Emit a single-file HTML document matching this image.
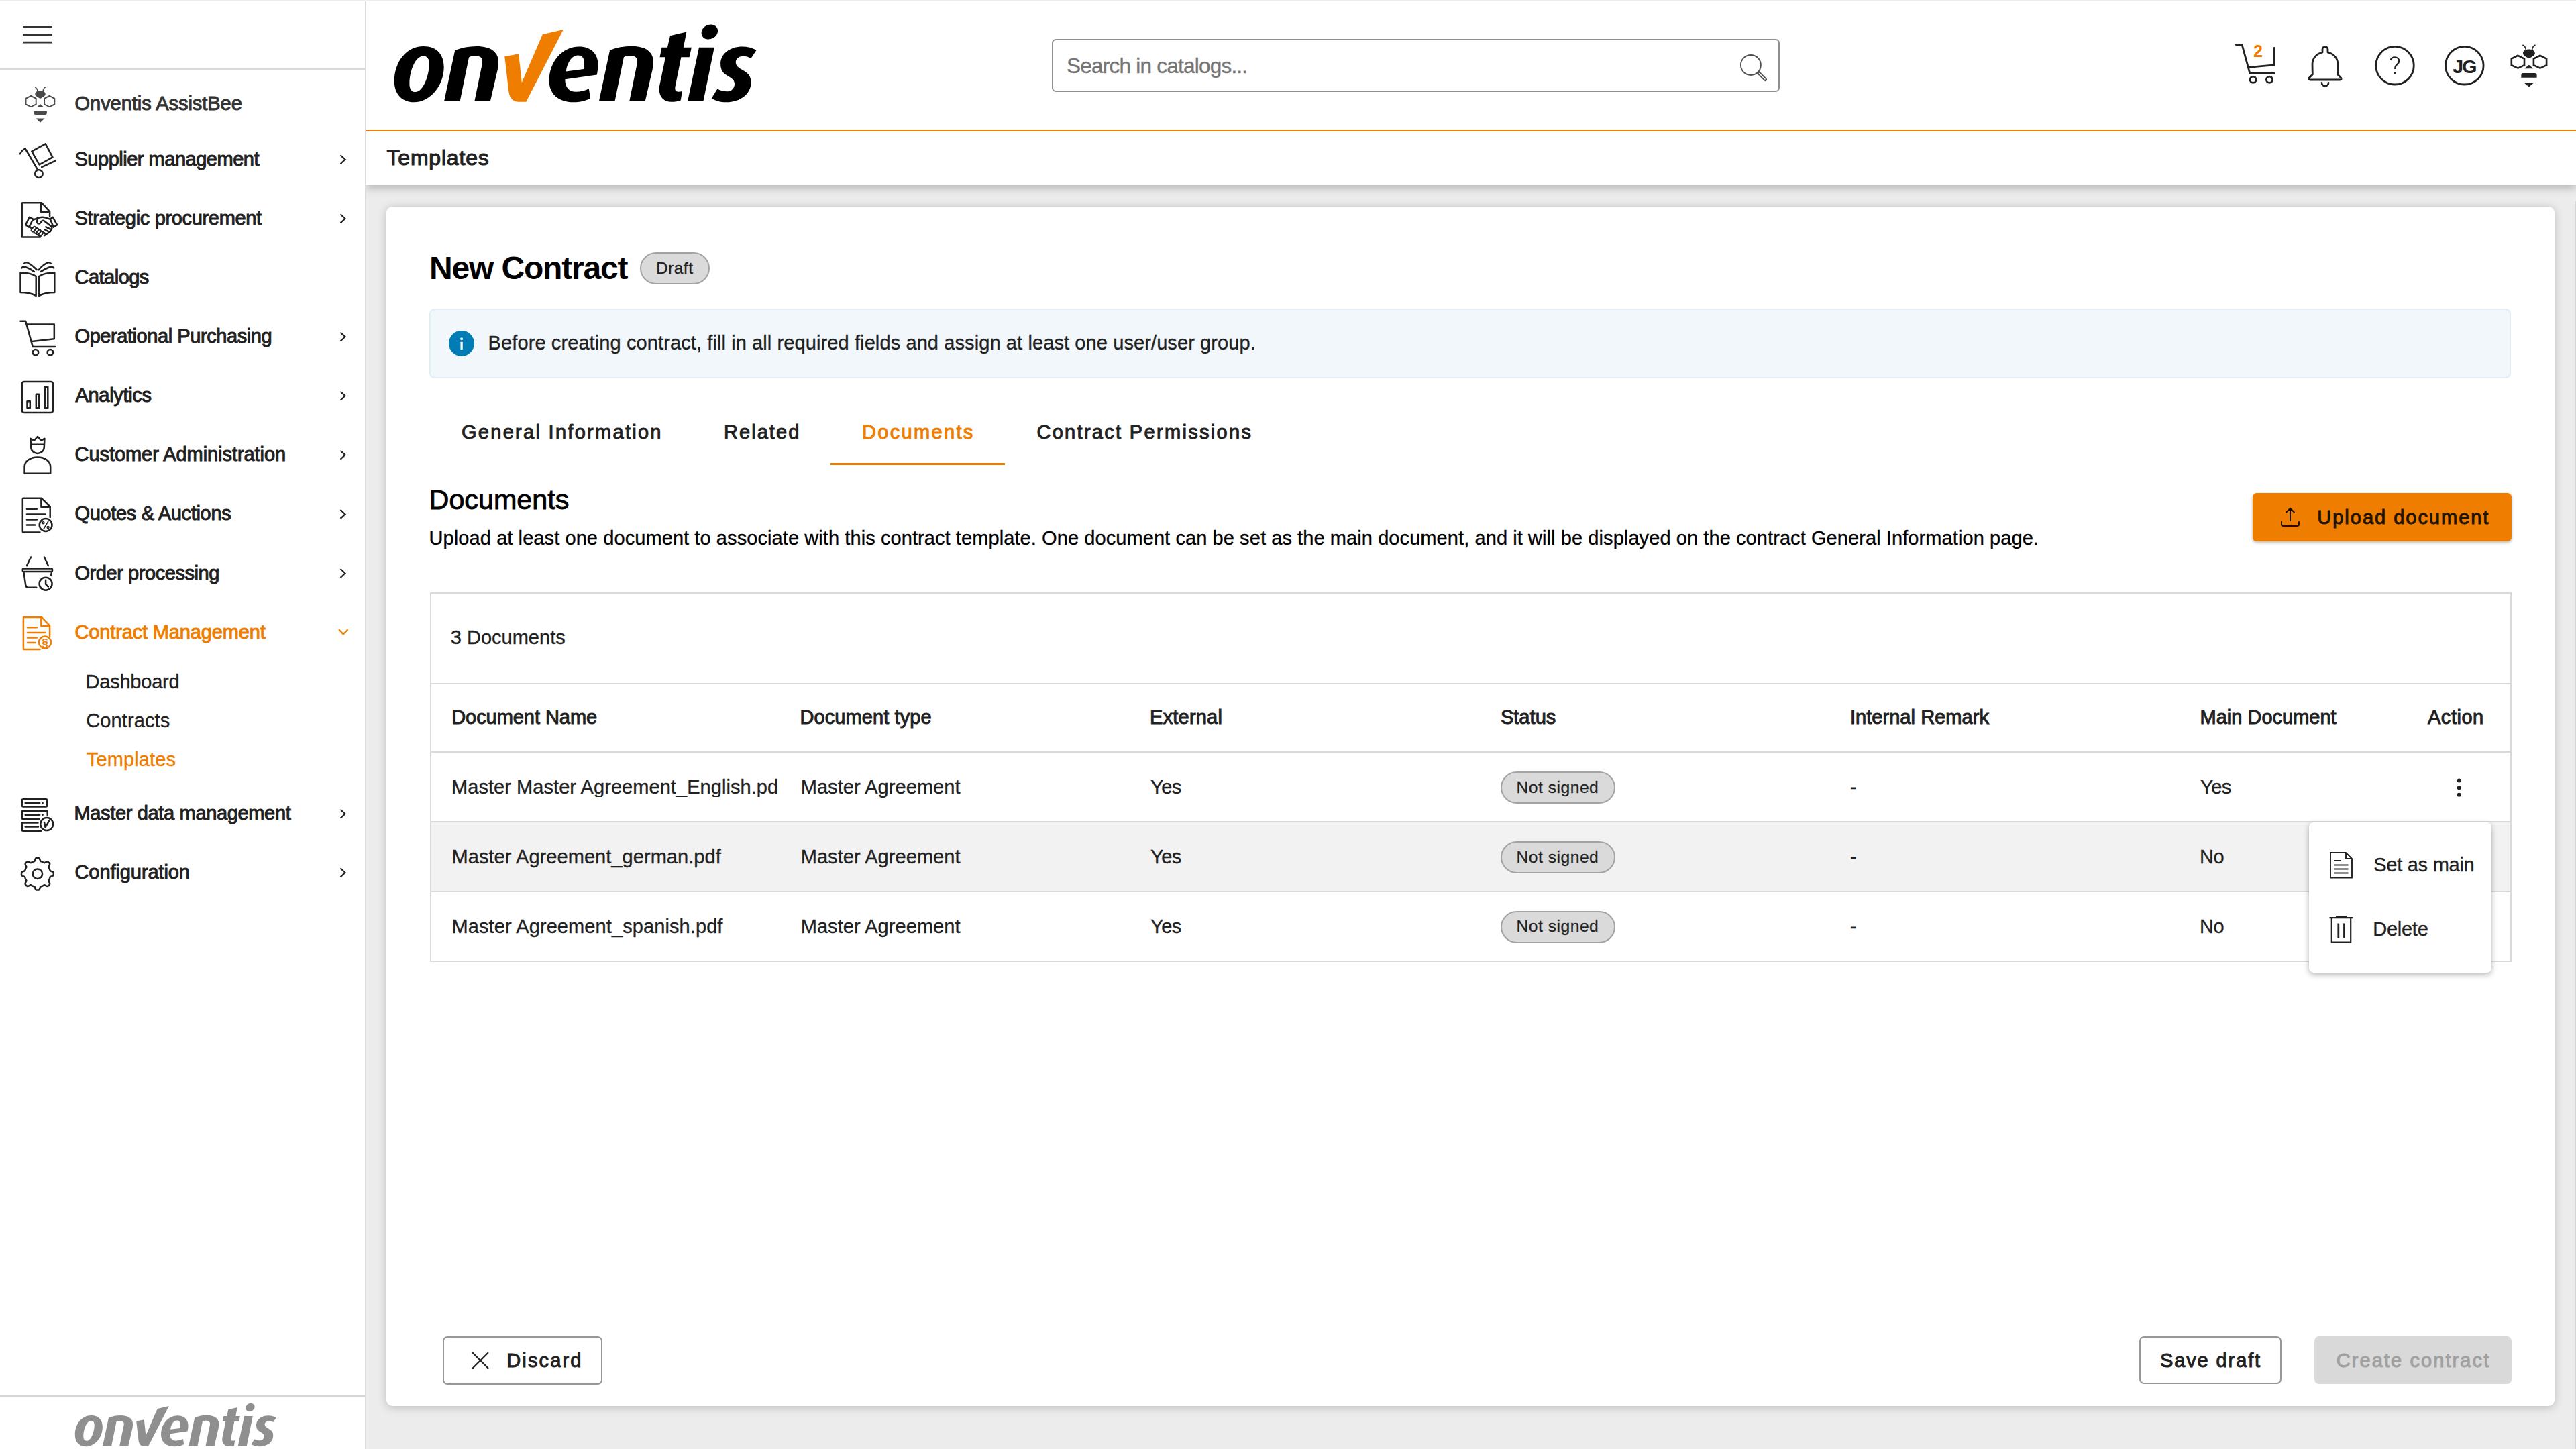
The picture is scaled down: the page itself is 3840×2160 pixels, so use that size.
<!DOCTYPE html>
<html><head><meta charset="utf-8"><title>Onventis - Templates</title>
<style>
html,body{margin:0;padding:0;}
body{width:3840px;height:2160px;position:relative;overflow:hidden;background:#ececec;font-family:"Liberation Sans",sans-serif;}
.a{position:absolute;box-sizing:border-box;}
.t{position:absolute;white-space:nowrap;font-family:"Liberation Sans",sans-serif;}
svg{position:absolute;left:0;top:0;overflow:visible}
</style></head><body>
<div class='a' style='left:546px;top:0px;width:3294.00px;height:276.00px;background:#fff;box-shadow:0 4px 12px rgba(0,0,0,0.25);'></div>
<div class='a' style='left:575.8px;top:307.8px;width:3232.30px;height:1788.20px;background:#fff;border-radius:9px;box-shadow:0 2px 14px rgba(0,0,0,0.22);'></div>
<div class='a' style='left:0px;top:0px;width:546.00px;height:2160.00px;background:#fff;border-right:2px solid #dcdcdc;'></div>
<div class='a' style='left:0px;top:102px;width:544.00px;height:2.00px;background:#d9d9d9;'></div>
<div class='a' style='left:0px;top:2080px;width:544.00px;height:2.00px;background:#d6d6d6;'></div>
<div class='a' style='left:0px;top:0px;width:3840.00px;height:1.00px;background:#e8ecf4;'></div>
<div class='a' style='left:0px;top:1px;width:3840.00px;height:1.00px;background:#d4d4d6;'></div>
<div class='a' style='left:3839px;top:300px;width:1.00px;height:1860.00px;background:#d6d6d6;'></div>
<div class='a' style='left:546px;top:194px;width:3294.00px;height:2.00px;background:#ef7d00;'></div>
<div class='a' style='left:1568.3px;top:58.3px;width:1084.70px;height:79.20px;border:2px solid #8f8f8f;border-radius:6px;background:#fff;'></div>
<div class='a' style='left:640.3px;top:460px;width:3103.20px;height:104.00px;background:#f1f7fb;border:2px solid #e1eef5;border-radius:8px;'></div>
<div class='a' style='left:954px;top:376.4px;width:103.50px;height:47.20px;background:#dadada;border:2px solid #a3a3a3;border-radius:24px;'></div>
<div class='a' style='left:1238px;top:689.5px;width:259.80px;height:3.00px;background:#ef7d00;'></div>
<div class='a' style='left:3358.2px;top:735px;width:385.80px;height:71.60px;background:#ef7d00;border-radius:6px;box-shadow:0 2px 4px rgba(0,0,0,0.28);'></div>
<div class='a' style='left:641px;top:882.5px;width:3103.00px;height:551.00px;border:2px solid #d9d9d9;'></div>
<div class='a' style='left:643px;top:1226px;width:3099.00px;height:102.00px;background:#f2f2f2;'></div>
<div class='a' style='left:643px;top:1017.5px;width:3099.00px;height:2.00px;background:#d9d9d9;'></div>
<div class='a' style='left:643px;top:1120px;width:3099.00px;height:2.00px;background:#d9d9d9;'></div>
<div class='a' style='left:643px;top:1224px;width:3099.00px;height:2.00px;background:#d9d9d9;'></div>
<div class='a' style='left:643px;top:1328px;width:3099.00px;height:2.00px;background:#d9d9d9;'></div>
<div class='a' style='left:2237.3px;top:1150.4px;width:170.90px;height:47.20px;background:#dadada;border:2px solid #a3a3a3;border-radius:24px;'></div>
<div class='a' style='left:2237.3px;top:1254.4px;width:170.90px;height:47.20px;background:#dadada;border:2px solid #a3a3a3;border-radius:24px;'></div>
<div class='a' style='left:2237.3px;top:1358.4px;width:170.90px;height:47.20px;background:#dadada;border:2px solid #a3a3a3;border-radius:24px;'></div>
<div class='a' style='left:3442px;top:1226.3px;width:271.70px;height:223.90px;background:#fff;border-radius:7px;box-shadow:0 3px 9px rgba(0,0,0,0.30);'></div>
<div class='a' style='left:660.3px;top:1992px;width:237.30px;height:71.60px;border:2px solid #979797;border-radius:7px;background:#fff;'></div>
<div class='a' style='left:3188.6px;top:1992.3px;width:212.90px;height:70.80px;border:2px solid #979797;border-radius:7px;background:#fff;'></div>
<div class='a' style='left:3450.2px;top:1992px;width:293.70px;height:71.00px;background:#d9d9d9;border-radius:7px;'></div>
<div class='t' style='left:111.50px;top:139.85px;font-size:29px;line-height:29px;font-weight:400;color:#333333;letter-spacing:-0.029px;-webkit-text-stroke:1.0px #333333;'>Onventis AssistBee</div>
<div class='t' style='left:111.50px;top:222.85px;font-size:29px;line-height:29px;font-weight:400;color:#212121;letter-spacing:-0.483px;-webkit-text-stroke:1.0px #212121;'>Supplier management</div>
<div class='t' style='left:111.50px;top:310.95px;font-size:29px;line-height:29px;font-weight:400;color:#212121;letter-spacing:-0.335px;-webkit-text-stroke:1.0px #212121;'>Strategic procurement</div>
<div class='t' style='left:111.50px;top:399.05px;font-size:29px;line-height:29px;font-weight:400;color:#212121;letter-spacing:-0.514px;-webkit-text-stroke:1.0px #212121;'>Catalogs</div>
<div class='t' style='left:111.50px;top:487.15px;font-size:29px;line-height:29px;font-weight:400;color:#212121;letter-spacing:-0.429px;-webkit-text-stroke:1.0px #212121;'>Operational Purchasing</div>
<div class='t' style='left:112.50px;top:575.25px;font-size:29px;line-height:29px;font-weight:400;color:#212121;letter-spacing:-0.312px;-webkit-text-stroke:1.0px #212121;'>Analytics</div>
<div class='t' style='left:111.50px;top:663.35px;font-size:29px;line-height:29px;font-weight:400;color:#212121;letter-spacing:-0.055px;-webkit-text-stroke:1.0px #212121;'>Customer Administration</div>
<div class='t' style='left:111.50px;top:751.45px;font-size:29px;line-height:29px;font-weight:400;color:#212121;letter-spacing:-0.337px;-webkit-text-stroke:1.0px #212121;'>Quotes &amp; Auctions</div>
<div class='t' style='left:111.50px;top:839.55px;font-size:29px;line-height:29px;font-weight:400;color:#212121;letter-spacing:-0.433px;-webkit-text-stroke:1.0px #212121;'>Order processing</div>
<div class='t' style='left:111.50px;top:927.65px;font-size:29px;line-height:29px;font-weight:400;color:#ef7d00;letter-spacing:-0.150px;-webkit-text-stroke:1.0px #ef7d00;'>Contract Management</div>
<div class='t' style='left:127.50px;top:1002.15px;font-size:29px;line-height:29px;font-weight:400;color:#212121;letter-spacing:-0.212px;-webkit-text-stroke:0.35px #212121;'>Dashboard</div>
<div class='t' style='left:128.20px;top:1060.05px;font-size:29px;line-height:29px;font-weight:400;color:#212121;letter-spacing:0.125px;-webkit-text-stroke:0.35px #212121;'>Contracts</div>
<div class='t' style='left:128.80px;top:1118.25px;font-size:29px;line-height:29px;font-weight:400;color:#ef7d00;letter-spacing:0.137px;-webkit-text-stroke:0.35px #ef7d00;'>Templates</div>
<div class='t' style='left:110.50px;top:1198.25px;font-size:29px;line-height:29px;font-weight:400;color:#212121;letter-spacing:-0.343px;-webkit-text-stroke:1.0px #212121;'>Master data management</div>
<div class='t' style='left:111.50px;top:1285.95px;font-size:29px;line-height:29px;font-weight:400;color:#212121;letter-spacing:-0.083px;-webkit-text-stroke:1.0px #212121;'>Configuration</div>
<div class='t' style='left:1590.10px;top:83.12px;font-size:31.5px;line-height:31.5px;font-weight:400;color:#757575;letter-spacing:-0.770px;-webkit-text-stroke:0.38px #757575;'>Search in catalogs...</div>
<div class='t' style='left:3359.00px;top:64.45px;font-size:25px;line-height:25px;font-weight:700;color:#ef7d00;letter-spacing:0.000px;'>2</div>
<div class='t' style='left:3656.20px;top:85.38px;font-size:28.5px;line-height:28.5px;font-weight:700;color:#212121;letter-spacing:-1.900px;'>JG</div>
<div class='t' style='left:576.50px;top:219.20px;font-size:32px;line-height:32px;font-weight:400;color:#212121;letter-spacing:0.800px;-webkit-text-stroke:1.1px #212121;'>Templates</div>
<div class='t' style='left:640.00px;top:376.00px;font-size:48px;line-height:48px;font-weight:700;color:#000000;letter-spacing:-1.164px;'>New Contract</div>
<div class='t' style='left:977.90px;top:387.88px;font-size:24.5px;line-height:24.5px;font-weight:400;color:#212121;letter-spacing:0.500px;-webkit-text-stroke:0.3px #212121;'>Draft</div>
<div class='t' style='left:727.60px;top:497.25px;font-size:29px;line-height:29px;font-weight:400;color:#212121;letter-spacing:0.101px;-webkit-text-stroke:0.35px #212121;'>Before creating contract, fill in all required fields and assign at least one user/user group.</div>
<div class='t' style='left:688.00px;top:630.15px;font-size:29px;line-height:29px;font-weight:400;color:#212121;letter-spacing:2.289px;-webkit-text-stroke:1.0px #212121;'>General Information</div>
<div class='t' style='left:1079.00px;top:630.15px;font-size:29px;line-height:29px;font-weight:400;color:#212121;letter-spacing:2.050px;-webkit-text-stroke:1.0px #212121;'>Related</div>
<div class='t' style='left:1285.00px;top:630.15px;font-size:29px;line-height:29px;font-weight:400;color:#ef7d00;letter-spacing:2.325px;-webkit-text-stroke:1.0px #ef7d00;'>Documents</div>
<div class='t' style='left:1545.40px;top:630.15px;font-size:29px;line-height:29px;font-weight:400;color:#212121;letter-spacing:2.311px;-webkit-text-stroke:1.0px #212121;'>Contract Permissions</div>
<div class='t' style='left:639.60px;top:725.39px;font-size:41.3px;line-height:41.3px;font-weight:400;color:#000000;letter-spacing:-0.013px;-webkit-text-stroke:0.9px #000000;'>Documents</div>
<div class='t' style='left:639.60px;top:788.15px;font-size:29px;line-height:29px;font-weight:400;color:#000000;letter-spacing:0.083px;-webkit-text-stroke:0.35px #000000;'>Upload at least one document to associate with this contract template. One document can be set as the main document, and it will be displayed on the contract General Information page.</div>
<div class='t' style='left:3454.30px;top:757.05px;font-size:29px;line-height:29px;font-weight:400;color:#1c1400;letter-spacing:1.986px;-webkit-text-stroke:1.0px #1c1400;'>Upload document</div>
<div class='t' style='left:671.70px;top:935.55px;font-size:29px;line-height:29px;font-weight:400;color:#212121;letter-spacing:0.020px;-webkit-text-stroke:0.35px #212121;'>3 Documents</div>
<div class='t' style='left:673.20px;top:1055.15px;font-size:29px;line-height:29px;font-weight:400;color:#212121;letter-spacing:-0.050px;-webkit-text-stroke:1.0px #212121;'>Document Name</div>
<div class='t' style='left:1192.50px;top:1055.15px;font-size:29px;line-height:29px;font-weight:400;color:#212121;letter-spacing:0.092px;-webkit-text-stroke:1.0px #212121;'>Document type</div>
<div class='t' style='left:1714.10px;top:1055.15px;font-size:29px;line-height:29px;font-weight:400;color:#212121;letter-spacing:0.200px;-webkit-text-stroke:1.0px #212121;'>External</div>
<div class='t' style='left:2236.90px;top:1055.15px;font-size:29px;line-height:29px;font-weight:400;color:#212121;letter-spacing:0.040px;-webkit-text-stroke:1.0px #212121;'>Status</div>
<div class='t' style='left:2757.90px;top:1055.15px;font-size:29px;line-height:29px;font-weight:400;color:#212121;letter-spacing:0.050px;-webkit-text-stroke:1.0px #212121;'>Internal Remark</div>
<div class='t' style='left:3279.60px;top:1055.15px;font-size:29px;line-height:29px;font-weight:400;color:#212121;letter-spacing:-0.008px;-webkit-text-stroke:1.0px #212121;'>Main Document</div>
<div class='t' style='left:3619.00px;top:1055.15px;font-size:29px;line-height:29px;font-weight:400;color:#212121;letter-spacing:0.520px;-webkit-text-stroke:1.0px #212121;'>Action</div>
<div class='t' style='left:673.00px;top:1158.95px;font-size:29px;line-height:29px;font-weight:400;color:#212121;letter-spacing:0.058px;-webkit-text-stroke:0.35px #212121;width:485.5px;overflow:hidden;'>Master Master Agreement_English.pdf</div>
<div class='t' style='left:1193.70px;top:1158.95px;font-size:29px;line-height:29px;font-weight:400;color:#212121;letter-spacing:0.060px;-webkit-text-stroke:0.35px #212121;'>Master Agreement</div>
<div class='t' style='left:1715.00px;top:1158.95px;font-size:29px;line-height:29px;font-weight:400;color:#212121;letter-spacing:-0.500px;-webkit-text-stroke:0.35px #212121;'>Yes</div>
<div class='t' style='left:2260.50px;top:1161.89px;font-size:24.6px;line-height:24.6px;font-weight:400;color:#212121;letter-spacing:0.522px;-webkit-text-stroke:0.3px #212121;'>Not signed</div>
<div class='t' style='left:3280.00px;top:1158.95px;font-size:29px;line-height:29px;font-weight:400;color:#212121;letter-spacing:-0.500px;-webkit-text-stroke:0.35px #212121;'>Yes</div>
<div class='t' style='left:2758.00px;top:1158.95px;font-size:29px;line-height:29px;font-weight:400;color:#212121;letter-spacing:0.000px;-webkit-text-stroke:0.35px #212121;'>-</div>
<div class='t' style='left:673.50px;top:1262.75px;font-size:29px;line-height:29px;font-weight:400;color:#212121;letter-spacing:0.058px;-webkit-text-stroke:0.35px #212121;'>Master Agreement_german.pdf</div>
<div class='t' style='left:1193.70px;top:1262.75px;font-size:29px;line-height:29px;font-weight:400;color:#212121;letter-spacing:0.060px;-webkit-text-stroke:0.35px #212121;'>Master Agreement</div>
<div class='t' style='left:1715.00px;top:1262.75px;font-size:29px;line-height:29px;font-weight:400;color:#212121;letter-spacing:-0.500px;-webkit-text-stroke:0.35px #212121;'>Yes</div>
<div class='t' style='left:2260.50px;top:1265.69px;font-size:24.6px;line-height:24.6px;font-weight:400;color:#212121;letter-spacing:0.522px;-webkit-text-stroke:0.3px #212121;'>Not signed</div>
<div class='t' style='left:3279.00px;top:1262.75px;font-size:29px;line-height:29px;font-weight:400;color:#212121;letter-spacing:-0.500px;-webkit-text-stroke:0.35px #212121;'>No</div>
<div class='t' style='left:2758.00px;top:1262.75px;font-size:29px;line-height:29px;font-weight:400;color:#212121;letter-spacing:0.000px;-webkit-text-stroke:0.35px #212121;'>-</div>
<div class='t' style='left:673.50px;top:1366.55px;font-size:29px;line-height:29px;font-weight:400;color:#212121;letter-spacing:0.093px;-webkit-text-stroke:0.35px #212121;'>Master Agreement_spanish.pdf</div>
<div class='t' style='left:1193.70px;top:1366.55px;font-size:29px;line-height:29px;font-weight:400;color:#212121;letter-spacing:0.060px;-webkit-text-stroke:0.35px #212121;'>Master Agreement</div>
<div class='t' style='left:1715.00px;top:1366.55px;font-size:29px;line-height:29px;font-weight:400;color:#212121;letter-spacing:-0.500px;-webkit-text-stroke:0.35px #212121;'>Yes</div>
<div class='t' style='left:2260.50px;top:1369.49px;font-size:24.6px;line-height:24.6px;font-weight:400;color:#212121;letter-spacing:0.522px;-webkit-text-stroke:0.3px #212121;'>Not signed</div>
<div class='t' style='left:3279.00px;top:1366.55px;font-size:29px;line-height:29px;font-weight:400;color:#212121;letter-spacing:-0.500px;-webkit-text-stroke:0.35px #212121;'>No</div>
<div class='t' style='left:2758.00px;top:1366.55px;font-size:29px;line-height:29px;font-weight:400;color:#212121;letter-spacing:0.000px;-webkit-text-stroke:0.35px #212121;'>-</div>
<div class='t' style='left:3538.20px;top:1275.05px;font-size:29px;line-height:29px;font-weight:400;color:#212121;letter-spacing:-0.260px;-webkit-text-stroke:0.35px #212121;'>Set as main</div>
<div class='t' style='left:3537.20px;top:1371.35px;font-size:29px;line-height:29px;font-weight:400;color:#212121;letter-spacing:-0.240px;-webkit-text-stroke:0.35px #212121;'>Delete</div>
<div class='t' style='left:755.30px;top:2014.25px;font-size:29px;line-height:29px;font-weight:400;color:#212121;letter-spacing:2.133px;-webkit-text-stroke:1.0px #212121;'>Discard</div>
<div class='t' style='left:3219.90px;top:2014.45px;font-size:29px;line-height:29px;font-weight:400;color:#212121;letter-spacing:1.900px;-webkit-text-stroke:1.0px #212121;'>Save draft</div>
<div class='t' style='left:3482.70px;top:2014.45px;font-size:29px;line-height:29px;font-weight:400;color:#a0a0a0;letter-spacing:2.093px;-webkit-text-stroke:1.0px #a0a0a0;'>Create contract</div>
<svg width='3840' height='2160' viewBox='0 0 3840 2160'><line x1='34' y1='40.2' x2='78' y2='40.2' stroke='#333' stroke-width='2.6'/><line x1='34' y1='51.9' x2='78' y2='51.9' stroke='#333' stroke-width='2.6'/><line x1='34' y1='63.1' x2='78' y2='63.1' stroke='#333' stroke-width='2.6'/><path d='M52 129.9 Q55.4 131.4 56 135.8 M67.8 129.9 Q64.5 131.4 64.1 135.8' fill='none' stroke='#4a4a4a' stroke-width='1.5'/><path d='M52.3 140.5 C52.3 137 55.5 134.9 60 134.9 C64.5 134.9 67.7 137 67.7 140.5 C67.7 143 63.5 145 60 146.9 C56.5 145 52.3 143 52.3 140.5 Z' fill='#4a4a4a'/><polygon points='46.1,142.9 53.7,146.8 53.7,155.4 46.1,159.3 38.5,155.4 38.5,146.8' fill='none' stroke='#4a4a4a' stroke-width='1.9'/><polygon points='73.7,142.9 81.3,146.8 81.3,155.4 73.7,159.3 66.1,155.4 66.1,146.8' fill='none' stroke='#4a4a4a' stroke-width='1.9'/><path d='M54.8 159.8 L65.3 159.8 L60 155 Z' fill='#4a4a4a'/><path d='M50.1 165.7 L69.9 165.7 L69.9 168 Q69.9 170.9 67 170.9 L53 170.9 Q50.1 170.9 50.1 168 Z' fill='#4a4a4a'/><path d='M53.5 176.5 L66.6 176.5 L60 182.7 Z' fill='#4a4a4a'/><path d='M29.9 229.3 Q32.4 224.3 37.4 221.2 L56 252.9 M62.2 249.2 L82.1 239.9' fill='none' stroke='#212121' stroke-width='2.5' stroke-linecap='round' stroke-linejoin='round'/><polygon points='47.3,225.6 67.8,214.4 78.4,234.3 58.5,245.5' fill='none' stroke='#212121' stroke-width='2.5' stroke-linecap='round' stroke-linejoin='round'/><circle cx='57.9' cy='259.1' r='5.8' fill='none' stroke='#212121' stroke-width='2.5' stroke-linecap='round' stroke-linejoin='round'/><path d='M74.1 322.5 L74.1 315.4 L62 302.2 L34 302.2 Q32.7 302.2 32.7 303.5 L32.7 352.2 Q32.7 353.5 34 353.5 L59.8 353.5 M61.2 302.2 L61.2 316 L74.1 316' fill='none' stroke='#212121' stroke-width='2.5' stroke-linecap='round' stroke-linejoin='round'/><polygon points='43.8,323.7 49.3,326.5 43.2,338.6 38.2,335.3' fill='none' stroke='#212121' stroke-width='2.5' stroke-linecap='round' stroke-linejoin='round'/><polygon points='78.6,323.7 85.2,335.3 79.7,338.6 74.7,326.5' fill='none' stroke='#212121' stroke-width='2.5' stroke-linecap='round' stroke-linejoin='round'/><path d='M49.8 327.6 C54 326 58 323.7 63.1 323.7 C67 323.7 70.5 325 74.1 326.5 M55.4 328 C54.8 331 55 333.6 58.1 333.6 C60 333.6 61 331 62.5 329.4 C63.5 328.5 65 328.7 66 329.4 L76.8 337.8 M77.3 339.3 C77.5 342 76 344 74.5 345.5 L66 351.2 M43.8 337.5 L47.5 341' fill='none' stroke='#212121' stroke-width='2.5' stroke-linecap='round' stroke-linejoin='round'/><rect x='48.0' y='337.4' width='4.2' height='8.4' rx='2.1' transform='rotate(38 50.1 341.6)' fill='#fff' stroke='#212121' stroke-width='2'/><rect x='51.9' y='339.8' width='4.2' height='8.4' rx='2.1' transform='rotate(38 54 344)' fill='#fff' stroke='#212121' stroke-width='2'/><rect x='55.5' y='342.1' width='4.2' height='8.4' rx='2.1' transform='rotate(38 57.6 346.3)' fill='#fff' stroke='#212121' stroke-width='2'/><rect x='58.8' y='344.4' width='4.2' height='8.4' rx='2.1' transform='rotate(38 60.9 348.6)' fill='#fff' stroke='#212121' stroke-width='2'/><path d='M68.3 338.3 L75 341.5 M66.4 342.2 L73 345.6 M64.5 346.2 L67.8 348.6' fill='none' stroke='#212121' stroke-width='2.5' stroke-linecap='round' stroke-linejoin='round'/><path d='M30.5 406.6 C38 406.6 48 408 53.7 412.1 L53.7 440.8 C48 437.5 38 435.9 30.5 435.9 Z M58.1 412.1 C64 408 74 406.6 81.3 406.6 L81.3 435.9 C74 435.9 64 437.5 58.1 440.8 Z' fill='none' stroke='#212121' stroke-width='2.5' stroke-linecap='round' stroke-linejoin='round'/><path d='M32.2 399.4 Q34 397 38 398 Q45 400.5 50.9 404.9 M36 392.8 Q38 390.5 41 391.5 Q48 395 54.8 402.2 M80.2 399.4 Q78.4 397 74.4 398 Q67.4 400.5 60.9 404.9 M75.8 392.8 Q73.8 390.5 70.8 391.5 Q63.8 395 57.6 402.2' fill='none' stroke='#212121' stroke-width='2.5' stroke-linecap='round' stroke-linejoin='round'/><path d='M30.5 478.8 L38.2 478.8 L48.7 516.9 L81.9 516.9 M39.9 483.6 L80.8 483.6 L80.8 505.3 L47.6 509' fill='none' stroke='#212121' stroke-width='2.5' stroke-linecap='round' stroke-linejoin='round'/><circle cx='52.9' cy='525.2' r='4.3' fill='none' stroke='#212121' stroke-width='2.5' stroke-linecap='round' stroke-linejoin='round'/><circle cx='74.9' cy='525.2' r='4.3' fill='none' stroke='#212121' stroke-width='2.5' stroke-linecap='round' stroke-linejoin='round'/><rect x='32.8' y='569' width='46.2' height='46' rx='3.2' fill='none' stroke='#212121' stroke-width='2.5' stroke-linecap='round' stroke-linejoin='round'/><rect x='40.5' y='598.2' width='4.3' height='9.8' fill='none' stroke='#212121' stroke-width='2.5' stroke-linecap='round' stroke-linejoin='round'/><rect x='53.8' y='587.7' width='4.2' height='20.3' fill='none' stroke='#212121' stroke-width='2.5' stroke-linecap='round' stroke-linejoin='round'/><rect x='67.1' y='576.7' width='4.2' height='31.3' fill='none' stroke='#212121' stroke-width='2.5' stroke-linecap='round' stroke-linejoin='round'/><path d='M45.4 653.8 L50.9 656.6 L55.9 651 L61.4 656.6 L66.4 653.8 L65.8 666.5 C65.8 672 61 675.9 55.9 675.9 C50.8 675.9 46.2 672 46.2 666.5 Z M46 662.7 L65.8 662.7' fill='none' stroke='#212121' stroke-width='2.5' stroke-linecap='round' stroke-linejoin='round'/><path d='M36.6 705.7 L36.6 696 C36.6 687.5 45 681.4 55.9 681.4 C66.8 681.4 75.2 687.5 75.2 696 L75.2 705.7 Z' fill='none' stroke='#212121' stroke-width='2.5' stroke-linecap='round' stroke-linejoin='round'/><path d='M74.7 771 L74.7 755.5 L62 742.8 L35 742.8 Q33.8 742.8 33.8 744 L33.8 792.4 Q33.8 793.6 35 793.6 L59.5 793.6 M61.4 742.8 L61.4 756 L74.7 756 M39.9 758.8 L54.8 758.8 M39.9 766.5 L67.5 766.5 M39.9 774.6 L54.8 774.6 M39.9 782.5 L52 782.5' fill='none' stroke='#212121' stroke-width='2.5' stroke-linecap='round' stroke-linejoin='round'/><circle cx='68.1' cy='782.5' r='9.4' fill='none' stroke='#212121' stroke-width='2.5' stroke-linecap='round' stroke-linejoin='round'/><circle cx='64.5' cy='779.3' r='1.5' fill='none' stroke='#212121' stroke-width='1.4'/><circle cx='71.6' cy='786' r='1.5' fill='none' stroke='#212121' stroke-width='1.4'/><line x1='72.3' y1='776.3' x2='64.7' y2='789' stroke='#212121' stroke-width='1.6'/><path d='M46 830.5 L39.9 843.2 M65.9 830.5 L71.9 843.2 M35.5 853.1 L38.2 872 Q38.8 875.8 42 875.8 L54.3 875.8 M76.9 853.1 L76.2 857.5' fill='none' stroke='#212121' stroke-width='2.5' stroke-linecap='round' stroke-linejoin='round'/><rect x='33.8' y='847.4' width='44.2' height='4.6' rx='1.6' fill='none' stroke='#212121' stroke-width='2.5' stroke-linecap='round' stroke-linejoin='round'/><circle cx='68.1' cy='870.2' r='9.5' fill='none' stroke='#212121' stroke-width='2.5' stroke-linecap='round' stroke-linejoin='round'/><path d='M68.1 864.7 L68.1 870.8 L71.9 874.7' fill='none' stroke='#212121' stroke-width='2.5' stroke-linecap='round' stroke-linejoin='round'/><path d='M74.1 948.5 L74.1 932.7 L62 920 L36 920 Q34.9 920 34.9 921.1 L34.9 966.9 Q34.9 968 36 968 L59.5 968 M61.4 920 L61.4 933.2 L74.1 933.2 M41 935.2 L54.8 935.2 M41 943 L67 943 M41 950.4 L54.8 950.4 M41 957.9 L52.6 957.9' fill='none' stroke='#ef7d00' stroke-width='2.5' stroke-linecap='round' stroke-linejoin='round'/><circle cx='67' cy='957.5' r='9' fill='none' stroke='#ef7d00' stroke-width='2.5' stroke-linecap='round' stroke-linejoin='round'/><text x='67' y='964' text-anchor='middle' font-family='Liberation Sans' font-weight='bold' font-size='17' fill='#ef7d00'>§</text><rect x='32.8' y='1191.2' width='37.4' height='11.4' rx='2' fill='none' stroke='#212121' stroke-width='2.5' stroke-linecap='round' stroke-linejoin='round'/><path d='M58 1221 L34.3 1221 Q32.8 1221 32.8 1219.5 L32.8 1210.3 Q32.8 1208.8 34.3 1208.8 L69.2 1208.8 Q70.7 1208.8 70.7 1210.3 L70.7 1215 M56.5 1226.5 L34.3 1226.5 Q32.8 1226.5 32.8 1228 L32.8 1237.2 Q32.8 1238.7 34.3 1238.7 L61 1238.7 M37.7 1197.1 L59.2 1197.1 M37.7 1214.8 L59.2 1214.8 M37.7 1232.5 L57 1232.5' fill='none' stroke='#212121' stroke-width='2.5' stroke-linecap='round' stroke-linejoin='round'/><circle cx='63.6' cy='1197.1' r='1.3' fill='#212121'/><circle cx='63.6' cy='1214.8' r='1.3' fill='#212121'/><circle cx='69.7' cy='1228.6' r='9.5' fill='none' stroke='#212121' stroke-width='2.5' stroke-linecap='round' stroke-linejoin='round'/><path d='M66 1226 L67.6 1233.5 L73.8 1222.5' fill='none' stroke='#212121' stroke-width='2.5' stroke-linecap='round' stroke-linejoin='round'/><path d='M55.90 1278.80 L56.53 1278.81 L57.15 1278.83 L57.77 1278.94 L58.36 1279.31 L58.88 1280.03 L59.33 1281.06 L59.70 1282.21 L60.04 1283.23 L60.42 1283.87 L60.90 1284.06 L61.38 1284.19 L61.86 1284.34 L62.34 1284.51 L62.82 1284.68 L63.29 1284.87 L63.75 1285.07 L64.21 1285.28 L64.66 1285.50 L65.11 1285.74 L65.55 1285.99 L66.02 1286.19 L66.74 1286.01 L67.70 1285.52 L68.78 1284.97 L69.82 1284.56 L70.70 1284.42 L71.38 1284.58 L71.89 1284.94 L72.35 1285.36 L72.80 1285.80 L73.24 1286.25 L73.66 1286.71 L74.02 1287.22 L74.18 1287.90 L74.04 1288.78 L73.63 1289.82 L73.08 1290.90 L72.59 1291.86 L72.41 1292.58 L72.61 1293.05 L72.86 1293.49 L73.10 1293.94 L73.32 1294.39 L73.53 1294.85 L73.73 1295.31 L73.92 1295.78 L74.09 1296.26 L74.26 1296.74 L74.41 1297.22 L74.54 1297.70 L74.73 1298.18 L75.37 1298.56 L76.39 1298.90 L77.54 1299.27 L78.57 1299.72 L79.29 1300.24 L79.66 1300.83 L79.77 1301.45 L79.79 1302.07 L79.80 1302.70 L79.79 1303.33 L79.77 1303.95 L79.66 1304.57 L79.29 1305.16 L78.57 1305.68 L77.54 1306.13 L76.39 1306.50 L75.37 1306.84 L74.73 1307.22 L74.54 1307.70 L74.41 1308.18 L74.26 1308.66 L74.09 1309.14 L73.92 1309.62 L73.73 1310.09 L73.53 1310.55 L73.32 1311.01 L73.10 1311.46 L72.86 1311.91 L72.61 1312.35 L72.41 1312.82 L72.59 1313.54 L73.08 1314.50 L73.63 1315.58 L74.04 1316.62 L74.18 1317.50 L74.02 1318.18 L73.66 1318.69 L73.24 1319.15 L72.80 1319.60 L72.35 1320.04 L71.89 1320.46 L71.38 1320.82 L70.70 1320.98 L69.82 1320.84 L68.78 1320.43 L67.70 1319.88 L66.74 1319.39 L66.02 1319.21 L65.55 1319.41 L65.11 1319.66 L64.66 1319.90 L64.21 1320.12 L63.75 1320.33 L63.29 1320.53 L62.82 1320.72 L62.34 1320.89 L61.86 1321.06 L61.38 1321.21 L60.90 1321.34 L60.42 1321.53 L60.04 1322.17 L59.70 1323.19 L59.33 1324.34 L58.88 1325.37 L58.36 1326.09 L57.77 1326.46 L57.15 1326.57 L56.53 1326.59 L55.90 1326.60 L55.27 1326.59 L54.65 1326.57 L54.03 1326.46 L53.44 1326.09 L52.92 1325.37 L52.47 1324.34 L52.10 1323.19 L51.76 1322.17 L51.38 1321.53 L50.90 1321.34 L50.42 1321.21 L49.94 1321.06 L49.46 1320.89 L48.98 1320.72 L48.51 1320.53 L48.05 1320.33 L47.59 1320.12 L47.14 1319.90 L46.69 1319.66 L46.25 1319.41 L45.78 1319.21 L45.06 1319.39 L44.10 1319.88 L43.02 1320.43 L41.98 1320.84 L41.10 1320.98 L40.42 1320.82 L39.91 1320.46 L39.45 1320.04 L39.00 1319.60 L38.56 1319.15 L38.14 1318.69 L37.78 1318.18 L37.62 1317.50 L37.76 1316.62 L38.17 1315.58 L38.72 1314.50 L39.21 1313.54 L39.39 1312.82 L39.19 1312.35 L38.94 1311.91 L38.70 1311.46 L38.48 1311.01 L38.27 1310.55 L38.07 1310.09 L37.88 1309.62 L37.71 1309.14 L37.54 1308.66 L37.39 1308.18 L37.26 1307.70 L37.07 1307.22 L36.43 1306.84 L35.41 1306.50 L34.26 1306.13 L33.23 1305.68 L32.51 1305.16 L32.14 1304.57 L32.03 1303.95 L32.01 1303.33 L32.00 1302.70 L32.01 1302.07 L32.03 1301.45 L32.14 1300.83 L32.51 1300.24 L33.23 1299.72 L34.26 1299.27 L35.41 1298.90 L36.43 1298.56 L37.07 1298.18 L37.26 1297.70 L37.39 1297.22 L37.54 1296.74 L37.71 1296.26 L37.88 1295.78 L38.07 1295.31 L38.27 1294.85 L38.48 1294.39 L38.70 1293.94 L38.94 1293.49 L39.19 1293.05 L39.39 1292.58 L39.21 1291.86 L38.72 1290.90 L38.17 1289.82 L37.76 1288.78 L37.62 1287.90 L37.78 1287.22 L38.14 1286.71 L38.56 1286.25 L39.00 1285.80 L39.45 1285.36 L39.91 1284.94 L40.42 1284.58 L41.10 1284.42 L41.98 1284.56 L43.02 1284.97 L44.10 1285.52 L45.06 1286.01 L45.78 1286.19 L46.25 1285.99 L46.69 1285.74 L47.14 1285.50 L47.59 1285.28 L48.05 1285.07 L48.51 1284.87 L48.98 1284.68 L49.46 1284.51 L49.94 1284.34 L50.42 1284.19 L50.90 1284.06 L51.38 1283.87 L51.76 1283.23 L52.10 1282.21 L52.47 1281.06 L52.92 1280.03 L53.44 1279.31 L54.03 1278.94 L54.65 1278.83 L55.27 1278.81 Z' fill='none' stroke='#212121' stroke-width='2.5' stroke-linecap='round' stroke-linejoin='round'/><circle cx='55.9' cy='1302.7' r='7.2' fill='none' stroke='#212121' stroke-width='2.5' stroke-linecap='round' stroke-linejoin='round'/><path d='M507.5 231.3 L514.5 237.8 L507.5 244.3' fill='none' stroke='#212121' stroke-width='2.2'/><path d='M507.5 319.4 L514.5 325.9 L507.5 332.4' fill='none' stroke='#212121' stroke-width='2.2'/><path d='M507.5 495.6 L514.5 502.1 L507.5 508.6' fill='none' stroke='#212121' stroke-width='2.2'/><path d='M507.5 583.7 L514.5 590.2 L507.5 596.7' fill='none' stroke='#212121' stroke-width='2.2'/><path d='M507.5 671.8 L514.5 678.3 L507.5 684.8' fill='none' stroke='#212121' stroke-width='2.2'/><path d='M507.5 759.9 L514.5 766.4 L507.5 772.9' fill='none' stroke='#212121' stroke-width='2.2'/><path d='M507.5 848.0 L514.5 854.5 L507.5 861.0' fill='none' stroke='#212121' stroke-width='2.2'/><path d='M505 938.3 L511.8 945.3 L518.6 938.3' fill='none' stroke='#ef7d00' stroke-width='2.2'/><path d='M507.5 1206.7 L514.5 1213.2 L507.5 1219.7' fill='none' stroke='#212121' stroke-width='2.2'/><path d='M507.5 1294.4 L514.5 1300.9 L507.5 1307.4' fill='none' stroke='#212121' stroke-width='2.2'/><path d='
M631.1 68.9 C652 68.9 661.7 82 661.7 100 C661.7 127 642 152.3 617 152.3 C599 152.3 587.8 140 587.8 121 C587.8 92 606 68.9 631.1 68.9 Z
M631.1 83.5 C637 83.5 639.8 88 639.8 95 C639.8 112 631 137.1 619.1 137.1 C613 137.1 610.4 132.5 610.4 125 C610.4 106 619 83.5 631.1 83.5 Z
M662.1 150.7 L678.2 74.9 C688 71 699 68.9 710.4 68.9 C732 68.9 743 78 743 92 C743 96 742.5 100 741.5 105 L730.9 150.7 L707.4 150.7 L717.6 101 C718.5 97 719.1 94 719.1 91.5 C719.1 86 715.5 83.3 708 83.3 C704.5 83.3 701 84 699 85.4 L685.7 150.7 Z
M818.6 120 C818.6 92 838 69.4 863.3 69.4 C881 69.4 891.5 80 891.5 96 C891.5 101 891 106 889.8 111.5 L842.3 118.2 C842.3 130.5 848.5 136.8 858.5 136.8 C865 136.8 872 135 877.8 132.2 L880.2 146.5 C873 150.5 864 152.3 855 152.3 C832 152.3 818.6 140 818.6 120 Z
M861 82.6 C868 82.6 870.8 87 870.8 93 C870.8 96 870.5 99.5 870 103.1 L843.6 106.6 C846 92 853 82.6 861 82.6 Z
M1023.4 47.5 L999 53.3 L994.9 70.8 L986.5 70.8 L983.5 85.3 L992 85.3 L983.5 126 C983 128.5 982.7 131 982.7 133 C982.7 145 990 151.7 1000.7 151.7 C1006 151.7 1011 150.8 1014.7 149.4 L1017 136 C1015 136.5 1013 136.7 1011 136.7 C1007.5 136.7 1006.3 134.5 1006.3 131.5 C1006.3 130 1006.6 128.5 1007 127 L1015.3 85.3 L1027.7 85.3 L1030.8 70.8 L1018.8 70.8 Z
M1042 70.8 L1064.8 70.8 L1048.5 150.5 L1025.2 150.5 Z
M1127.6 74.8 L1119.5 87.1 C1116 85 1112 83.8 1107.8 83.8 C1101 83.8 1096.8 88 1096.8 93 C1096.8 98 1101 101 1108 105 C1116 109.5 1119.5 114 1119.5 123 C1119.5 140 1104 152.3 1082.2 152.3 C1074 152.3 1066 150 1060.7 146.5 L1069.4 132.5 C1074 135 1079 136.2 1084.6 136.2 C1091 136.2 1095 131 1095 125 C1095 119 1090 116 1083 112 C1077 108.5 1074.1 103 1074.1 95 C1074.1 80 1088 69.4 1106.7 69.4 C1114 69.4 1121 71 1127.6 74.8 Z
' fill='#000000' fill-rule='evenodd'/><g transform='translate(230.9,-0.2)'><path d='M662.1 150.7 L678.2 74.9 C688 71 699 68.9 710.4 68.9 C732 68.9 743 78 743 92 C743 96 742.5 100 741.5 105 L730.9 150.7 L707.4 150.7 L717.6 101 C718.5 97 719.1 94 719.1 91.5 C719.1 86 715.5 83.3 708 83.3 C704.5 83.3 701 84 699 85.4 L685.7 150.7 Z' fill='#000000'/></g><ellipse cx='1057.8' cy='47.5' rx='12.6' ry='10.6' transform='rotate(-28 1057.8 47.5)' fill='#000000'/><path d='M752.3 84.3 L773.2 80.2 L777.8 122.9 L808.8 51.2 L839.8 44.1 L784.3 151.7 L772.4 151.7 C764 151.7 759.5 145 758.3 136.5 Z' fill='#ef7d00'/><g transform='translate(-214.78,2071.62) scale(0.5556)'><path d='
M631.1 68.9 C652 68.9 661.7 82 661.7 100 C661.7 127 642 152.3 617 152.3 C599 152.3 587.8 140 587.8 121 C587.8 92 606 68.9 631.1 68.9 Z
M631.1 83.5 C637 83.5 639.8 88 639.8 95 C639.8 112 631 137.1 619.1 137.1 C613 137.1 610.4 132.5 610.4 125 C610.4 106 619 83.5 631.1 83.5 Z
M662.1 150.7 L678.2 74.9 C688 71 699 68.9 710.4 68.9 C732 68.9 743 78 743 92 C743 96 742.5 100 741.5 105 L730.9 150.7 L707.4 150.7 L717.6 101 C718.5 97 719.1 94 719.1 91.5 C719.1 86 715.5 83.3 708 83.3 C704.5 83.3 701 84 699 85.4 L685.7 150.7 Z
M818.6 120 C818.6 92 838 69.4 863.3 69.4 C881 69.4 891.5 80 891.5 96 C891.5 101 891 106 889.8 111.5 L842.3 118.2 C842.3 130.5 848.5 136.8 858.5 136.8 C865 136.8 872 135 877.8 132.2 L880.2 146.5 C873 150.5 864 152.3 855 152.3 C832 152.3 818.6 140 818.6 120 Z
M861 82.6 C868 82.6 870.8 87 870.8 93 C870.8 96 870.5 99.5 870 103.1 L843.6 106.6 C846 92 853 82.6 861 82.6 Z
M1023.4 47.5 L999 53.3 L994.9 70.8 L986.5 70.8 L983.5 85.3 L992 85.3 L983.5 126 C983 128.5 982.7 131 982.7 133 C982.7 145 990 151.7 1000.7 151.7 C1006 151.7 1011 150.8 1014.7 149.4 L1017 136 C1015 136.5 1013 136.7 1011 136.7 C1007.5 136.7 1006.3 134.5 1006.3 131.5 C1006.3 130 1006.6 128.5 1007 127 L1015.3 85.3 L1027.7 85.3 L1030.8 70.8 L1018.8 70.8 Z
M1042 70.8 L1064.8 70.8 L1048.5 150.5 L1025.2 150.5 Z
M1127.6 74.8 L1119.5 87.1 C1116 85 1112 83.8 1107.8 83.8 C1101 83.8 1096.8 88 1096.8 93 C1096.8 98 1101 101 1108 105 C1116 109.5 1119.5 114 1119.5 123 C1119.5 140 1104 152.3 1082.2 152.3 C1074 152.3 1066 150 1060.7 146.5 L1069.4 132.5 C1074 135 1079 136.2 1084.6 136.2 C1091 136.2 1095 131 1095 125 C1095 119 1090 116 1083 112 C1077 108.5 1074.1 103 1074.1 95 C1074.1 80 1088 69.4 1106.7 69.4 C1114 69.4 1121 71 1127.6 74.8 Z
' fill='#8f8f8f' fill-rule='evenodd'/><g transform='translate(230.9,-0.2)'><path d='M662.1 150.7 L678.2 74.9 C688 71 699 68.9 710.4 68.9 C732 68.9 743 78 743 92 C743 96 742.5 100 741.5 105 L730.9 150.7 L707.4 150.7 L717.6 101 C718.5 97 719.1 94 719.1 91.5 C719.1 86 715.5 83.3 708 83.3 C704.5 83.3 701 84 699 85.4 L685.7 150.7 Z' fill='#8f8f8f'/></g><ellipse cx='1057.8' cy='47.5' rx='12.6' ry='10.6' transform='rotate(-28 1057.8 47.5)' fill='#8f8f8f'/><path d='M752.3 84.3 L773.2 80.2 L777.8 122.9 L808.8 51.2 L839.8 44.1 L784.3 151.7 L772.4 151.7 C764 151.7 759.5 145 758.3 136.5 Z' fill='#8f8f8f'/></g><circle cx='2609.9' cy='97' r='15' fill='none' stroke='#4d4d4d' stroke-width='1.8'/><line x1='2621.5' y1='108.5' x2='2631.5' y2='118.5' stroke='#4d4d4d' stroke-width='5' stroke-linecap='round'/><line x1='2622.5' y1='109.5' x2='2631' y2='118' stroke='#fff' stroke-width='1.6' stroke-linecap='round'/><path d='M3333.2 66.5 L3342.1 66.5 L3353.8 109.3 L3390.7 109.3 M3352.2 100.4 L3390.3 96.9 L3390.3 71.3' fill='none' stroke='#212121' stroke-width='2.8' stroke-linecap='round' stroke-linejoin='round'/><circle cx='3358.6' cy='118.7' r='4.6' fill='none' stroke='#212121' stroke-width='2.8' stroke-linecap='round' stroke-linejoin='round'/><circle cx='3383' cy='118.7' r='4.6' fill='none' stroke='#212121' stroke-width='2.8' stroke-linecap='round' stroke-linejoin='round'/><path d='M3462 78 L3462 73.5 A4 4 0 0 1 3470 73.5 L3470 78 M3462 78 C3453 80 3447 87 3447 96 L3447.3 111 L3442.3 116 Q3441 119 3444 119 L3488 119 Q3491 119 3489.7 116 L3484.7 111 L3485 96 C3485 87 3479 80 3470 78 M3461 123.3 A5 5 0 0 0 3471 123.3' fill='none' stroke='#212121' stroke-width='2.8' stroke-linecap='round' stroke-linejoin='round'/><circle cx='3570' cy='97.7' r='28.3' fill='none' stroke='#212121' stroke-width='2.8'/><path d='M3563.8 89.5 C3564.5 86.5 3567 85.3 3570 85.3 C3573.5 85.3 3576.3 87.5 3576.3 91 C3576.3 94.5 3573 96 3571.5 98 C3570.5 99.5 3570.2 100.5 3570.2 103' fill='none' stroke='#212121' stroke-width='2.3'/><circle cx='3569.9' cy='108.6' r='1.7' fill='#212121'/><circle cx='3673.8' cy='97.7' r='28.3' fill='none' stroke='#212121' stroke-width='2.8'/><path d='M3760.4 67 Q3764.5 68.5 3765.3 74 M3779.5 67 Q3775.4 68.5 3774.6 74' fill='none' stroke='#212121' stroke-width='1.6'/><path d='M3761 79.5 C3761 75.5 3765 73.5 3769.9 73.5 C3774.8 73.5 3778.8 75.5 3778.8 79.5 C3778.8 82.5 3774 85 3769.9 87.1 C3765.8 85 3761 82.5 3761 79.5 Z' fill='#212121'/><polygon points='3753.4,82.8 3763.0,87.5 3763.0,97.2 3753.4,101.6 3743.8,97.2 3743.8,87.5' fill='none' stroke='#212121' stroke-width='2.6'/><polygon points='3786.5,82.8 3796.1,87.5 3796.1,97.2 3786.5,101.6 3776.9,97.2 3776.9,87.5' fill='none' stroke='#212121' stroke-width='2.6'/><path d='M3763.2 102.3 L3776.5 102.3 L3769.9 96.8 Z M3758.3 115.7 L3781.6 115.7 L3781.6 112 Q3781.6 109 3778.6 109 L3761.3 109 Q3758.3 109 3758.3 112 Z M3762 122.9 L3777.8 122.9 L3769.9 129.5 Z' fill='#212121'/><circle cx='688' cy='511.9' r='19' fill='#017cb4'/><circle cx='688.1' cy='505.2' r='1.9' fill='#fff'/><rect x='686.5' y='509.8' width='3.2' height='11.4' fill='#fff'/><path d='M3414 758.2 L3414 777 M3407.6 764 L3414 757.8 L3420.4 764 M3401 777.3 L3401 781.5 Q3401 784 3403.5 784 L3424.5 784 Q3427 784 3427 781.5 L3427 777.3' fill='none' stroke='#140e00' stroke-width='1.9'/><circle cx='3665.7' cy='1163.5' r='3' fill='#212121'/><circle cx='3665.7' cy='1174.2' r='3' fill='#212121'/><circle cx='3665.7' cy='1184.8' r='3' fill='#212121'/><path d='M3474 1271 L3497 1271 L3506 1280 L3506 1308.5 L3474 1308.5 Z M3497 1271 L3497 1280 L3506 1280 M3479 1283 L3490 1283 M3479 1289.5 L3500.5 1289.5 M3479 1295.5 L3500.5 1295.5 M3479 1301.5 L3500.5 1301.5' fill='none' stroke='#212121' stroke-width='1.9'/><path d='M3472.5 1368.2 L3507.5 1368.2 M3482 1366.3 L3498 1366.3 M3475.8 1368.2 L3475.8 1404.5 L3504.2 1404.5 L3504.2 1368.2 ' fill='none' stroke='#212121' stroke-width='2.2'/><path d='M3485.8 1376.5 L3485.8 1398 M3494.5 1376.5 L3494.5 1398' fill='none' stroke='#212121' stroke-width='2.8'/><path d='M704.2 2016.2 L728 2040 M728 2016.2 L704.2 2040' fill='none' stroke='#212121' stroke-width='2.2'/></svg>
</body></html>
